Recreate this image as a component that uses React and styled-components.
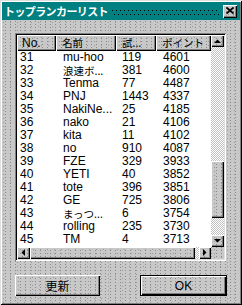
import styled, { createGlobalStyle, css } from "styled-components";

const GlobalStyle = createGlobalStyle`
  html, body {
    margin: 0;
    padding: 0;
    background: #c0c0c0;
  }
  * {
    box-sizing: border-box;
  }
`;

const dither = css`
  background-color: #c8c8c8;
  background-image:
    conic-gradient(at 1px 1px, transparent 270deg, #8a8a8a 0),
    conic-gradient(at 1px 1px, transparent 270deg, #999999 0);
  background-size: 5px 3px, 7px 4px;
  background-position: 0 0, 3px 2px;
`;

const checker = css`
  background: repeating-conic-gradient(#c0c0c0 0 25%, #ffffff 0 50%) 0 0 / 2px 2px;
`;

const raised = css`
  box-shadow: inset 1px 1px #ffffff, inset -1px -1px #000000, inset -2px -2px #808080;
`;

const jpFont = css`
  font-family: "Noto Sans CJK JP", sans-serif;
  font-size: 10.5px;
`;

const Window = styled.div`
  ${dither};
  width: 242px;
  height: 305px;
  padding: 2px;
  display: flex;
  flex-direction: column;
  box-shadow: inset 1px 1px #dfdfdf, inset -1px -1px #000000, inset 2px 2px #ffffff,
    inset -2px -2px #808080;
  font-family: "Liberation Sans", "Noto Sans CJK JP", sans-serif;
  font-size: 12px;
  color: #000;
`;

const TitleBar = styled.div`
  height: 18px;
  background: #008080;
  display: flex;
  align-items: center;
  padding: 0 3px 0 2px;
`;

const Title = styled.span`
  color: #fff;
  font-family: "Noto Sans CJK JP", sans-serif;
  font-weight: 700;
  font-size: 11px;
  letter-spacing: -0.6px;
  line-height: 18px;
  white-space: nowrap;
`;

const TitleDots = styled.div`
  flex: 1;
  align-self: stretch;
  margin: 0 3px 0 4px;
  display: flex;
  flex-direction: column;
  gap: 3px;
  padding-top: 8px;
`;

const DotLine = styled.div`
  height: 1px;
  margin-left: ${(p) => p.$offset}px;
  background: repeating-linear-gradient(90deg, #000 0 1px, transparent 1px 4px);
`;

const CloseButton = styled.div`
  ${dither};
  ${raised};
  width: 14px;
  height: 13px;
  display: flex;
  align-items: center;
  justify-content: center;
  padding-right: 1px;
  padding-bottom: 1px;
`;

const Body = styled.div`
  flex: 1;
  display: flex;
  flex-direction: column;
  padding: 13px 14px 0 13px;
`;

const ListView = styled.div`
  width: 211px;
  height: 228px;
  padding: 2px;
  box-shadow: inset 1px 1px #808080, inset -1px -1px #ffffff, inset 2px 2px #000000,
    inset -2px -2px #dfdfdf;
  display: grid;
  grid-template-columns: 194px 13px;
  grid-template-rows: 212px 12px;
`;

const ListArea = styled.div`
  background: #fff;
  overflow: hidden;
`;

const columns = "39px 60px 40px 55px";

const HeaderRow = styled.div`
  display: grid;
  grid-template-columns: ${columns};
  height: 16px;
`;

const HeaderCell = styled.div`
  ${dither};
  ${raised};
  padding-left: ${(p) => p.$pad}px;
  line-height: 16px;
  white-space: nowrap;
  overflow: hidden;
  ${(p) => p.$jp && jpFont};
`;

const Row = styled.div`
  display: grid;
  grid-template-columns: ${columns};
  height: 13px;
  line-height: 13px;
`;

const Cell = styled.div`
  padding-left: ${(p) => p.$pad}px;
  white-space: nowrap;
  overflow: hidden;
  ${(p) => p.$jp && jpFont};
`;

const VScroll = styled.div`
  display: flex;
  flex-direction: column;
`;

const HScroll = styled.div`
  display: flex;
`;

const ArrowButton = styled.div`
  ${dither};
  ${raised};
  flex: none;
  width: ${(p) => p.$w}px;
  height: ${(p) => p.$h}px;
  display: flex;
  align-items: center;
  justify-content: center;
  padding: 0 1px 1px 0;
`;

const Track = styled.div`
  ${checker};
  flex: ${(p) => (p.$size ? `0 0 ${p.$size}px` : "1")};
`;

const Thumb = styled.div`
  ${dither};
  ${raised};
  flex: 0 0 ${(p) => p.$size}px;
`;

const Corner = styled.div`
  ${dither};
`;

const ButtonRow = styled.div`
  display: flex;
  justify-content: space-between;
  width: 212px;
  margin-top: 14px;
`;

const Button = styled.div`
  ${dither};
  width: ${(p) => p.$w}px;
  height: 21px;
  display: flex;
  align-items: center;
  justify-content: center;
  font-size: 12px;
  ${raised};
  ${(p) =>
    p.$default &&
    css`
      box-shadow: inset 0 0 0 1px #000, inset 2px 2px #ffffff, inset -2px -2px #000000,
        inset -3px -3px #808080;
    `}
`;

const ButtonLabel = styled.span`
  font-family: ${(p) => (p.$latin ? `"Liberation Sans", sans-serif` : `"Noto Sans CJK JP", sans-serif`)};
  line-height: 1;
`;

const Tri = ({ dir }) => {
  const pts = {
    up: "0,4 7,4 3.5,0.5",
    down: "0,0 7,0 3.5,3.5",
    left: "4,0 4,7 0.5,3.5",
    right: "0,0 0,7 3.5,3.5",
  }[dir];
  const vertical = dir === "up" || dir === "down";
  return (
    <svg width={vertical ? 7 : 4} height={vertical ? 4 : 7} viewBox={vertical ? "0 0 7 4" : "0 0 4 7"}>
      <polygon points={pts} fill="#000" />
    </svg>
  );
};

const rows = [
  ["31", "mu-hoo", "119", "4601"],
  ["32", "浪速ボ...", "381", "4600", true],
  ["33", "Tenma", "77", "4487"],
  ["34", "PNJ", "1443", "4337"],
  ["35", "NakiNe...", "25", "4185"],
  ["36", "nako", "21", "4106"],
  ["37", "kita", "11", "4102"],
  ["38", "no", "910", "4087"],
  ["39", "FZE", "329", "3933"],
  ["40", "YETI", "40", "3852"],
  ["41", "tote", "396", "3851"],
  ["42", "GE", "725", "3806"],
  ["43", "まっつ...", "6", "3754", true],
  ["44", "rolling", "235", "3730"],
  ["45", "TM", "4", "3713"],
];

export default function App() {
  return (
    <>
      <GlobalStyle />
      <Window>
        <TitleBar>
          <Title>トップランカーリスト</Title>
          <TitleDots>
            <DotLine $offset={0} />
            <DotLine $offset={2} />
          </TitleDots>
          <CloseButton>
            <svg width="8" height="7" viewBox="0 0 8 7">
              <path d="M0.5 0.5 L7.5 6.5 M7.5 0.5 L0.5 6.5" stroke="#000" strokeWidth="1.8" />
            </svg>
          </CloseButton>
        </TitleBar>
        <Body>
          <ListView>
            <ListArea>
              <HeaderRow>
                <HeaderCell $pad={5}>No.</HeaderCell>
                <HeaderCell $pad={6} $jp>名前</HeaderCell>
                <HeaderCell $pad={6} $jp>試...</HeaderCell>
                <HeaderCell $pad={6} $jp>ポイント</HeaderCell>
              </HeaderRow>
              {rows.map(([no, name, tries, points, jp]) => (
                <Row key={no}>
                  <Cell $pad={3}>{no}</Cell>
                  <Cell $pad={7} $jp={jp}>{name}</Cell>
                  <Cell $pad={6}>{tries}</Cell>
                  <Cell $pad={7}>{points}</Cell>
                </Row>
              ))}
            </ListArea>
            <VScroll>
              <ArrowButton $w={13} $h={12}>
                <Tri dir="up" />
              </ArrowButton>
              <Track $size={114} />
              <Thumb $size={57} />
              <Track />
              <ArrowButton $w={13} $h={12}>
                <Tri dir="down" />
              </ArrowButton>
            </VScroll>
            <HScroll>
              <ArrowButton $w={13} $h={12}>
                <Tri dir="left" />
              </ArrowButton>
              <Thumb $size={165} />
              <Track />
              <ArrowButton $w={12} $h={12}>
                <Tri dir="right" />
              </ArrowButton>
            </HScroll>
            <Corner />
          </ListView>
          <ButtonRow>
            <Button $w={85}>
              <ButtonLabel>更新</ButtonLabel>
            </Button>
            <Button $w={87} $default>
              <ButtonLabel $latin>OK</ButtonLabel>
            </Button>
          </ButtonRow>
        </Body>
      </Window>
    </>
  );
}
